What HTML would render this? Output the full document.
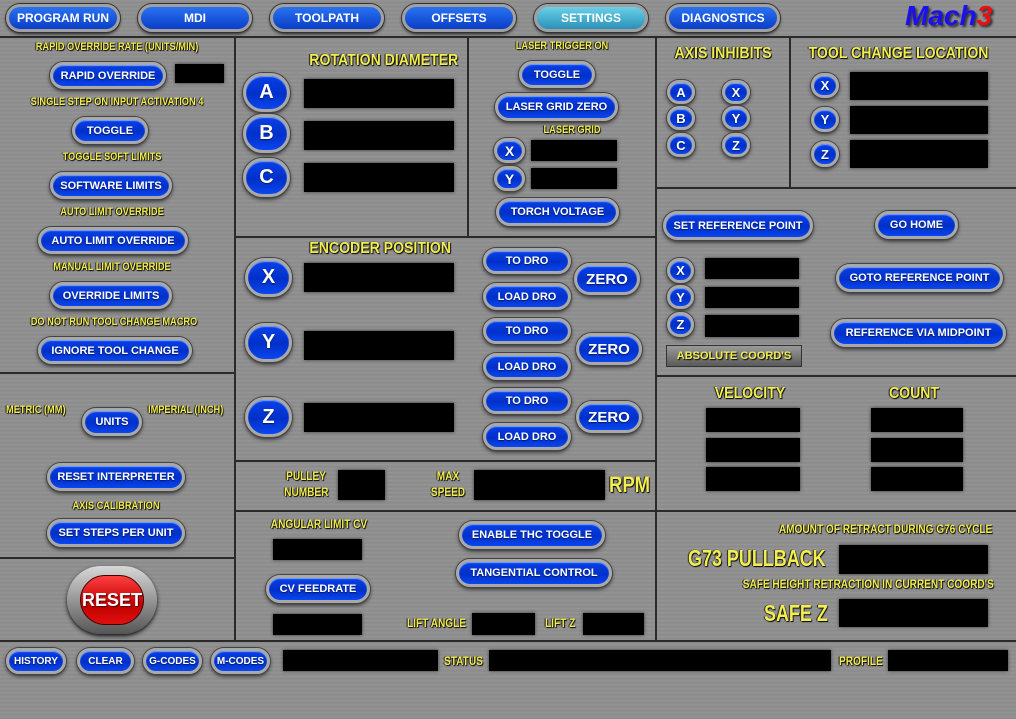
<!DOCTYPE html>
<html><head><meta charset="utf-8"><style>
*{box-sizing:border-box;margin:0;padding:0}
body{width:1016px;height:719px;overflow:hidden;position:relative;font-family:"Liberation Sans",sans-serif;
background:repeating-linear-gradient(180deg,#8d8d8d 0px,#9a9a9a 1px,#858585 2px,#929292 3px,#8a8a8a 4px);}
.a{position:absolute}
.ln{position:absolute;background:#2a2a2a}
.b{position:absolute;border-radius:999px;background:linear-gradient(#0a40e8,#0030c8 55%,#0a46f0);
border:3px solid #a9a9a9;box-shadow:0 0 0 1px #444,0 2px 4px #222,inset 0 1px 1px #7aa8ff;
color:#fff;font-weight:bold;font-size:11px;display:flex;align-items:center;justify-content:center;white-space:nowrap;text-shadow:0 1px 1px #001a60}
.c{font-size:20px}
.l{position:absolute;color:#f2ee50;font-weight:bold;font-family:"Liberation Sans",sans-serif;font-size:11px;text-shadow:1px 1px 1px #000,-1px 0 1px #000;white-space:nowrap;text-align:center;transform:scaleX(.84);transform-origin:center}
.lf{transform-origin:left}
.big{font-size:16px;transform:scaleX(.88)}
.d{position:absolute;background:#000;box-shadow:0 0 3px #333}
.t{position:absolute;border-radius:999px;background:linear-gradient(#2a72f0,#0a3ec8);border:3px solid #a0a0a0;box-shadow:0 0 0 1px #333,0 2px 3px #222;color:#fff;font-weight:bold;font-size:12px;display:flex;align-items:center;justify-content:center}
</style></head><body>
<div class="t" style="left:6px;top:4px;width:114px;height:28px">PROGRAM RUN</div>
<div class="t" style="left:138px;top:4px;width:114px;height:28px">MDI</div>
<div class="t" style="left:270px;top:4px;width:114px;height:28px">TOOLPATH</div>
<div class="t" style="left:402px;top:4px;width:114px;height:28px">OFFSETS</div>
<div class="t" style="left:534px;top:4px;width:114px;height:28px;background:linear-gradient(#6ad0e8,#2a90b8)">SETTINGS</div>
<div class="t" style="left:666px;top:4px;width:114px;height:28px">DIAGNOSTICS</div>
<div class="a" style="left:905px;top:0px;font:italic bold 28px 'Liberation Sans',sans-serif;color:#1a10f0;text-shadow:2px 2px 2px #333">Mach<span style="color:#e81010">3</span></div>

<div class="ln" style="left:0;top:36px;width:1016px;height:2px"></div>
<div class="ln" style="left:234px;top:36px;width:2px;height:604px"></div>
<div class="ln" style="left:655px;top:36px;width:2px;height:604px"></div>
<div class="ln" style="left:467px;top:36px;width:2px;height:200px"></div>
<div class="ln" style="left:789px;top:36px;width:2px;height:151px"></div>
<div class="ln" style="left:0;top:372px;width:234px;height:2px"></div>
<div class="ln" style="left:0;top:557px;width:234px;height:2px"></div>
<div class="ln" style="left:234px;top:236px;width:421px;height:2px"></div>
<div class="ln" style="left:234px;top:460px;width:421px;height:2px"></div>
<div class="ln" style="left:234px;top:510px;width:421px;height:2px"></div>
<div class="ln" style="left:655px;top:187px;width:361px;height:2px"></div>
<div class="ln" style="left:655px;top:375px;width:361px;height:2px"></div>
<div class="ln" style="left:655px;top:510px;width:361px;height:2px"></div>
<div class="ln" style="left:0;top:640px;width:1016px;height:2px"></div>

<div class="l" style="left:0;width:234px;top:41px">RAPID OVERRIDE RATE (UNITS/MIN)</div>
<div class="b" style="left:50px;top:62px;width:116px;height:27px">RAPID OVERRIDE</div>
<div class="d" style="left:175px;top:64px;width:49px;height:19px"></div>
<div class="l" style="left:0;width:234px;top:96px">SINGLE STEP ON INPUT ACTIVATION 4</div>
<div class="b" style="left:72px;top:117px;width:76px;height:27px">TOGGLE</div>
<div class="l" style="left:0;width:224px;top:151px">TOGGLE SOFT LIMITS</div>
<div class="b" style="left:50px;top:172px;width:122px;height:27px">SOFTWARE LIMITS</div>
<div class="l" style="left:0;width:224px;top:206px">AUTO LIMIT OVERRIDE</div>
<div class="b" style="left:38px;top:227px;width:150px;height:27px">AUTO LIMIT OVERRIDE</div>
<div class="l" style="left:0;width:224px;top:261px">MANUAL LIMIT OVERRIDE</div>
<div class="b" style="left:50px;top:282px;width:122px;height:27px">OVERRIDE LIMITS</div>
<div class="l" style="left:0;width:228px;top:316px">DO NOT RUN TOOL CHANGE MACRO</div>
<div class="b" style="left:38px;top:337px;width:154px;height:27px">IGNORE TOOL CHANGE</div>
<div class="l lf" style="left:6px;top:404px">METRIC (MM)</div>
<div class="b" style="left:82px;top:408px;width:60px;height:28px">UNITS</div>
<div class="l lf" style="left:148px;top:404px">IMPERIAL (INCH)</div>
<div class="b" style="left:47px;top:463px;width:138px;height:28px">RESET INTERPRETER</div>
<div class="l" style="left:0;width:232px;top:500px">AXIS CALIBRATION</div>
<div class="b" style="left:47px;top:519px;width:138px;height:28px">SET STEPS PER UNIT</div>
<div class="a" style="left:67px;top:566px;width:90px;height:68px;border-radius:40px;background:linear-gradient(#d8d8d8,#555);box-shadow:0 2px 4px #111;padding:9px 13px">
<div style="width:100%;height:100%;border-radius:30px;background:linear-gradient(#ff4040,#c00000 60%,#e01010);border:1px solid #400;color:#fff;font-weight:bold;font-size:18px;display:flex;align-items:center;justify-content:center;text-shadow:1px 1px 1px #400">RESET</div></div>

<div class="l big" style="left:300px;width:155px;top:52px">ROTATION DIAMETER</div>
<div class="b c" style="left:243px;top:73px;width:47px;height:39px">A</div>
<div class="d" style="left:304px;top:79px;width:150px;height:29px"></div>
<div class="b c" style="left:243px;top:114px;width:47px;height:39px">B</div>
<div class="d" style="left:304px;top:121px;width:150px;height:29px"></div>
<div class="b c" style="left:243px;top:158px;width:47px;height:39px">C</div>
<div class="d" style="left:304px;top:163px;width:150px;height:29px"></div>

<div class="l" style="left:469px;width:186px;top:40px">LASER TRIGGER ON</div>
<div class="b" style="left:519px;top:61px;width:76px;height:27px">TOGGLE</div>
<div class="b" style="left:495px;top:93px;width:123px;height:28px">LASER GRID ZERO</div>
<div class="l" style="left:530px;width:84px;top:124px">LASER GRID</div>
<div class="b" style="left:494px;top:138px;width:31px;height:25px;font-size:14px">X</div>
<div class="d" style="left:531px;top:140px;width:86px;height:21px"></div>
<div class="b" style="left:494px;top:166px;width:31px;height:25px;font-size:14px">Y</div>
<div class="d" style="left:531px;top:168px;width:86px;height:21px"></div>
<div class="b" style="left:496px;top:198px;width:123px;height:28px">TORCH VOLTAGE</div>

<div class="l big" style="left:300px;width:156px;top:240px">ENCODER POSITION</div>
<div class="b c" style="left:245px;top:258px;width:47px;height:39px">X</div>
<div class="d" style="left:304px;top:263px;width:150px;height:29px"></div>
<div class="b c" style="left:245px;top:323px;width:47px;height:39px">Y</div>
<div class="d" style="left:304px;top:331px;width:150px;height:29px"></div>
<div class="b c" style="left:245px;top:397px;width:47px;height:40px">Z</div>
<div class="d" style="left:304px;top:403px;width:150px;height:29px"></div>
<div class="b" style="left:483px;top:248px;width:88px;height:26px">TO DRO</div>
<div class="b" style="left:483px;top:283px;width:88px;height:27px">LOAD DRO</div>
<div class="b" style="left:574px;top:263px;width:66px;height:32px;font-size:15px">ZERO</div>
<div class="b" style="left:483px;top:318px;width:88px;height:26px">TO DRO</div>
<div class="b" style="left:483px;top:353px;width:88px;height:27px">LOAD DRO</div>
<div class="b" style="left:576px;top:333px;width:66px;height:32px;font-size:15px">ZERO</div>
<div class="b" style="left:483px;top:388px;width:88px;height:26px">TO DRO</div>
<div class="b" style="left:483px;top:423px;width:88px;height:27px">LOAD DRO</div>
<div class="b" style="left:576px;top:401px;width:66px;height:32px;font-size:15px">ZERO</div>

<div class="l" style="left:280px;width:52px;top:468px;line-height:16px;font-size:12px">PULLEY<br>NUMBER</div>
<div class="d" style="left:338px;top:470px;width:47px;height:30px"></div>
<div class="l" style="left:426px;width:44px;top:468px;line-height:16px;font-size:12px">MAX<br>SPEED</div>
<div class="d" style="left:474px;top:470px;width:131px;height:30px"></div>
<div class="l lf" style="left:609px;top:472px;font-size:22px">RPM</div>

<div class="l" style="left:262px;width:110px;top:517px;font-size:12px">ANGULAR LIMIT CV</div>
<div class="d" style="left:273px;top:539px;width:89px;height:21px"></div>
<div class="b" style="left:266px;top:575px;width:104px;height:28px">CV FEEDRATE</div>
<div class="d" style="left:273px;top:614px;width:89px;height:21px"></div>
<div class="b" style="left:459px;top:521px;width:146px;height:28px">ENABLE THC TOGGLE</div>
<div class="b" style="left:456px;top:559px;width:156px;height:28px">TANGENTIAL CONTROL</div>
<div class="l lf" style="left:407px;top:616px;font-size:12px">LIFT ANGLE</div>
<div class="d" style="left:472px;top:613px;width:63px;height:22px"></div>
<div class="l lf" style="left:545px;top:616px;font-size:12px">LIFT Z</div>
<div class="d" style="left:583px;top:613px;width:61px;height:22px"></div>

<div class="l big" style="left:657px;width:132px;top:45px">AXIS INHIBITS</div>
<div class="b" style="left:667px;top:80px;width:28px;height:24px;font-size:13px">A</div>
<div class="b" style="left:722px;top:80px;width:28px;height:24px;font-size:13px">X</div>
<div class="b" style="left:667px;top:106px;width:28px;height:24px;font-size:13px">B</div>
<div class="b" style="left:722px;top:106px;width:28px;height:24px;font-size:13px">Y</div>
<div class="b" style="left:667px;top:133px;width:28px;height:24px;font-size:13px">C</div>
<div class="b" style="left:722px;top:133px;width:28px;height:24px;font-size:13px">Z</div>
<div class="l big" style="left:791px;width:215px;top:45px">TOOL CHANGE LOCATION</div>
<div class="b" style="left:811px;top:73px;width:28px;height:25px;font-size:13px">X</div>
<div class="d" style="left:850px;top:72px;width:138px;height:28px"></div>
<div class="b" style="left:811px;top:107px;width:28px;height:25px;font-size:13px">Y</div>
<div class="d" style="left:850px;top:106px;width:138px;height:28px"></div>
<div class="b" style="left:811px;top:141px;width:28px;height:26px;font-size:13px">Z</div>
<div class="d" style="left:850px;top:140px;width:138px;height:28px"></div>

<div class="b" style="left:663px;top:211px;width:150px;height:29px">SET REFERENCE POINT</div>
<div class="b" style="left:875px;top:211px;width:83px;height:28px">GO HOME</div>
<div class="b" style="left:667px;top:258px;width:27px;height:25px;font-size:13px">X</div>
<div class="d" style="left:705px;top:258px;width:94px;height:21px"></div>
<div class="b" style="left:667px;top:285px;width:27px;height:24px;font-size:13px">Y</div>
<div class="d" style="left:705px;top:287px;width:94px;height:21px"></div>
<div class="b" style="left:667px;top:312px;width:27px;height:25px;font-size:13px">Z</div>
<div class="d" style="left:705px;top:315px;width:94px;height:22px"></div>
<div class="a" style="left:666px;top:345px;width:136px;height:22px;background:linear-gradient(#9a9a9a,#5a5a5a);border:1px solid #333;color:#f2ee50;font-weight:bold;font-size:11px;display:flex;align-items:center;justify-content:center;text-shadow:1px 1px 1px #000">ABSOLUTE COORD'S</div>
<div class="b" style="left:836px;top:264px;width:167px;height:28px">GOTO REFERENCE POINT</div>
<div class="b" style="left:831px;top:319px;width:175px;height:28px">REFERENCE VIA MIDPOINT</div>

<div class="l big" style="left:700px;width:100px;top:385px">VELOCITY</div>
<div class="l big" style="left:864px;width:100px;top:385px">COUNT</div>
<div class="d" style="left:706px;top:408px;width:94px;height:24px"></div>
<div class="d" style="left:706px;top:438px;width:94px;height:24px"></div>
<div class="d" style="left:706px;top:467px;width:94px;height:24px"></div>
<div class="d" style="left:871px;top:408px;width:92px;height:24px"></div>
<div class="d" style="left:871px;top:438px;width:92px;height:24px"></div>
<div class="d" style="left:871px;top:467px;width:92px;height:24px"></div>

<div class="l" style="left:760px;width:236px;top:522px;font-size:12px">AMOUNT OF RETRACT DURING G76 CYCLE</div>
<div class="l lf" style="left:688px;top:545px;font-size:23px;transform:scaleX(.78)">G73 PULLBACK</div>
<div class="d" style="left:839px;top:545px;width:149px;height:29px"></div>
<div class="l" style="left:720px;width:284px;top:577px;font-size:12px">SAFE HEIGHT RETRACTION IN CURRENT COORD'S</div>
<div class="l lf" style="left:764px;top:600px;font-size:23px;transform:scaleX(.78)">SAFE Z</div>
<div class="d" style="left:839px;top:599px;width:149px;height:28px"></div>

<div class="b" style="left:6px;top:648px;width:60px;height:26px;font-size:10px">HISTORY</div>
<div class="b" style="left:77px;top:648px;width:57px;height:26px;font-size:10px">CLEAR</div>
<div class="b" style="left:143px;top:648px;width:59px;height:26px;font-size:10px">G-CODES</div>
<div class="b" style="left:211px;top:648px;width:59px;height:26px;font-size:10px">M-CODES</div>
<div class="d" style="left:283px;top:650px;width:155px;height:21px"></div>
<div class="l lf" style="left:444px;top:654px;font-size:12px">STATUS</div>
<div class="d" style="left:489px;top:650px;width:342px;height:21px"></div>
<div class="l lf" style="left:839px;top:654px;font-size:12px">PROFILE</div>
<div class="d" style="left:888px;top:650px;width:120px;height:21px"></div>
</body></html>
